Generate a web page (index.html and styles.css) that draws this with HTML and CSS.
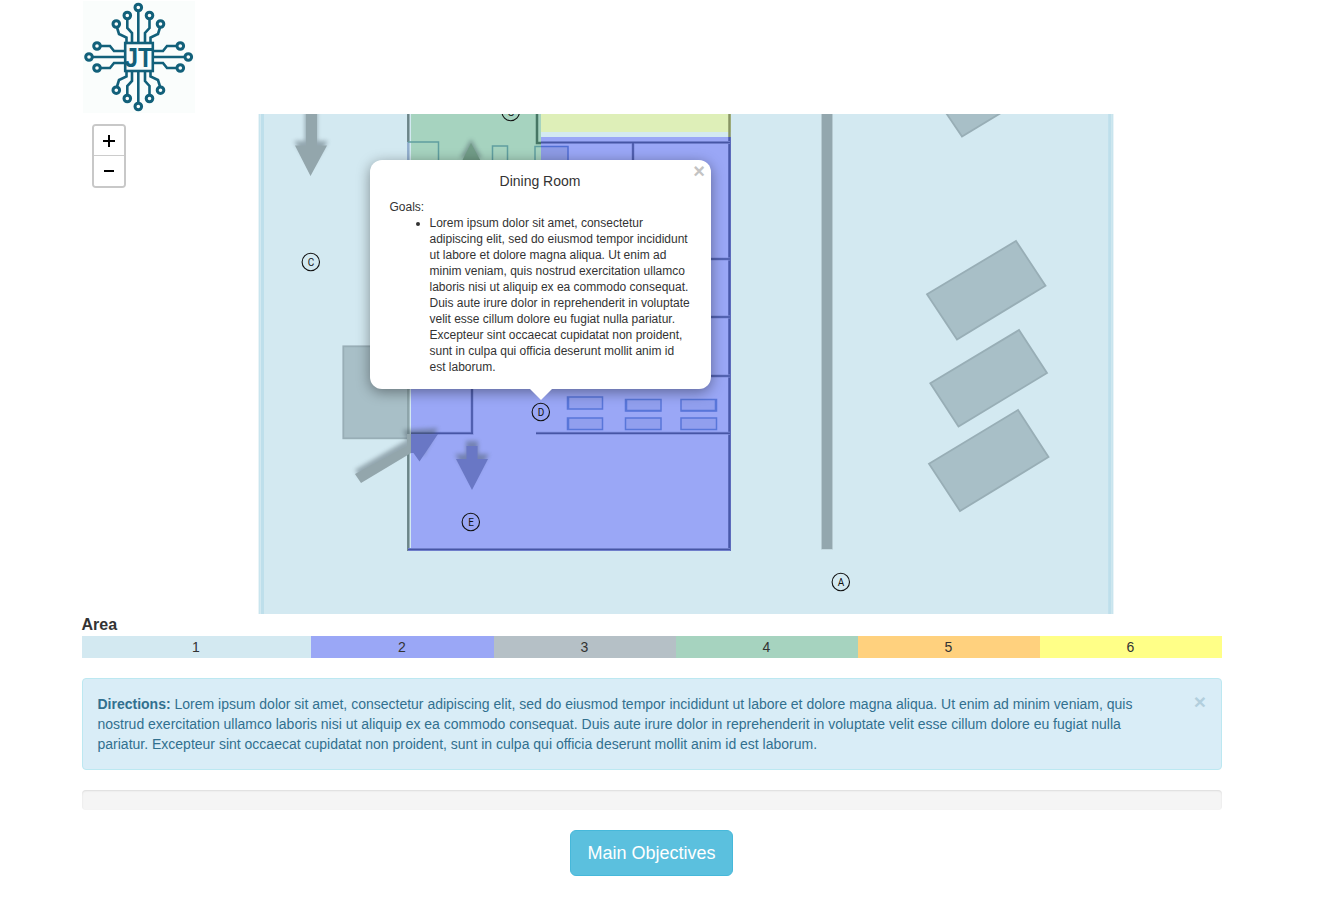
FILE: index.html
```html
<!DOCTYPE html>
<html lang="en">
<head>
<meta charset="utf-8">
<title>Floor Map</title>
<link rel="stylesheet" href="styles.css">
</head>
<body>
<main class="container">
  <header class="brand">
    <svg class="logo" viewBox="82 0 114 114" aria-label="JT">
      <rect class="logo-bg" x="83" y="1" width="112" height="112"/>
      <g class="traces">
        <rect x="125.2" y="43" width="27.6" height="28"/>
        <path d="M138.3 11V43M127.3 19V28L132 33V43M149.5 19V28L145 33V43M117 27.500L119 34L126.500 37.500V43M160 27.500L158 34L150.500 37.500V43"/>
        <path d="M138.300 103V71M127.300 95V86L132 81V71M149.500 95V86L145 81V71M117 86.500L119 80L126.500 76.500V71M160 86.500L158 80L150.500 76.500V71"/>
        <path d="M92 57H125M100 46H110L114 51H125M100 68H110L114 63H125M185 57H153M177 46H167L163 51H153M177 68H167L163 63H153"/>
      </g>
      <g class="pads">
        <circle cx="138.300" cy="7.500" r="3.300"/><circle cx="127.300" cy="15.500" r="3.300"/><circle cx="149.500" cy="15.500" r="3.300"/><circle cx="116.300" cy="24" r="3.300"/><circle cx="160.500" cy="24" r="3.300"/>
        <circle cx="138.300" cy="106.500" r="3.300"/><circle cx="127.300" cy="98.500" r="3.300"/><circle cx="149.500" cy="98.500" r="3.300"/><circle cx="116.300" cy="90.200" r="3.300"/><circle cx="160.500" cy="90.200" r="3.300"/>
        <circle cx="89" cy="57" r="3.300"/><circle cx="97" cy="46" r="3.300"/><circle cx="97" cy="68" r="3.300"/>
        <circle cx="188.300" cy="57" r="3.300"/><circle cx="180.300" cy="46" r="3.300"/><circle cx="180.300" cy="68" r="3.300"/>
      </g>
      <text class="logo-text" x="124.500" y="67.200" textLength="28.500" lengthAdjust="spacingAndGlyphs">JT</text>
    </svg>
  </header>

  <section class="map">
    <svg class="plan" viewBox="82 114 1140 500">
      <defs>
        <filter id="soft" x="-50%" y="-50%" width="200%" height="200%"><feGaussianBlur stdDeviation="2"/></filter>
      </defs>
      <rect class="area1" x="258.500" y="114" width="855" height="500"/>
      <path class="edge" d="M262.500 114V614M1109.700 114V614"/>
      <path class="edge-soft" d="M259.500 114V614M1112.500 114V614"/>

      <rect class="building" x="343.300" y="346.300" width="65" height="92"/>
      <path class="building" d="M940 104L962 136.500L1010 107.500L990 90Z"/>
      <path class="building" d="M927 294.300L1016 241L1045.500 285.700L957 339.500Z"/>
      <path class="building" d="M930.300 383.300L1019 330L1047 373L958.500 426.500Z"/>
      <path class="building" d="M929 463.700L1018 410L1048.500 457L960 511Z"/>
      <rect class="road-edge" x="821" y="114" width="12" height="435.500"/>
      <rect class="road" x="822" y="114" width="10" height="435"/>

      <rect class="area4" x="411" y="114" width="130" height="120"/>
      <rect class="area6" x="541" y="114" width="190" height="18"/>
      <path class="area2" d="M541 137H731V551H411V234H541Z"/>

      <path class="wall-gray" d="M408.300 114V142M408.300 438V551"/>
      <path class="wall-light" d="M408.300 142V390"/>
      <path class="wall-gray wall-faint" d="M408.300 389V438"/>
      <path class="wall-green" d="M537 114V143H541"/>
      <path class="wall-olive" d="M729.500 114V137"/>
      <path class="wall-navy" d="M729.500 137V551"/>
      <path class="wall-halo" d="M541 142.500H730M633 143V170M472 380V435M711 259H730M711 317H730M711 376H730M411 433.300H473M536 433.300H730M408 549.500H730"/>
      <path class="wall" d="M541 142.500H730M633 143V170M472 380V434M711 259H730M711 317H730M711 376H730M411 433.300H473M536 433.300H730M408 549.500H730"/>
      <path class="fixture-green" d="M408 142H438.500V170M492.500 170V146H507.500V170M535 170V146.500H541"/>
      <rect class="fixture-fill" x="541" y="146" width="27" height="20"/>
      <path class="fixture-blue" d="M541 146.500H568V170"/>

      <g class="tables">
        <rect x="567.500" y="397" width="35" height="12"/><rect x="625.500" y="399.500" width="35.500" height="11.500"/><rect x="681" y="399.500" width="35.500" height="11.500"/>
        <rect x="567.500" y="418" width="35" height="11.500"/><rect x="625.500" y="418" width="35.500" height="11.500"/><rect x="681" y="418" width="35.500" height="11.500"/>
        <path d="M568.500 397V409M568.500 418V430M626.500 399V411M626 410.500H661M681 410.500H716M715.500 399V411"/>
      </g>

      <g class="arrow-shadow" filter="url(#soft)">
        <path d="M305 105H317V141H328L311 168L294 141H305Z"/>
        <path d="M355 470L407 440L403 430L438 428L423 456L414 447L361 478Z"/>
        <path d="M466 441H478V454H489L472 483L455 454H466Z"/>
        <path d="M471 139L482 158H460Z"/>
      </g>
      <path class="arrow" d="M306 114H317V145.500H327L310.500 176L295 145.500H306ZM355 474L407 446V434H411V453L361 483Z"/>
      <path class="arrow-indigo" d="M411 434H438L419.500 461.500L413.500 453H411ZM466.500 446H477.500V459H488L472 490L456 459H466.500Z"/>
      <path class="arrow-green" d="M471 143L484 167H459Z"/>

      <g class="pins">
        <circle cx="510.700" cy="112" r="8.700"/><circle cx="310.800" cy="262" r="8.700"/><circle cx="540.800" cy="412" r="8.700"/><circle cx="470.800" cy="522" r="8.700"/><circle cx="840.800" cy="582" r="8.700"/>
      </g>
      <g class="pin-text">
        <text x="511" y="115.600">G</text><text x="311" y="265.600">C</text><text x="541" y="415.600">D</text><text x="471" y="525.600">E</text><text x="841" y="585.600">A</text>
      </g>
    </svg>

    <div class="zoom">
      <button class="zoom-btn" aria-label="Zoom in"><svg viewBox="0 0 30 30"><path d="M9 15H21M15 9V21"/></svg></button>
      <button class="zoom-btn" aria-label="Zoom out"><svg viewBox="0 0 30 30"><path d="M10 15H20"/></svg></button>
    </div>

    <article class="popup">
      <button class="popup-close">×</button>
      <h4 class="popup-title">Dining Room</h4>
      <div>Goals:</div>
      <ul class="goals">
        <li>Lorem ipsum dolor sit amet, consectetur<br>adipiscing elit, sed do eiusmod tempor incididunt<br>ut labore et dolore magna aliqua. Ut enim ad<br>minim veniam, quis nostrud exercitation ullamco<br>laboris nisi ut aliquip ex ea commodo consequat.<br>Duis aute irure dolor in reprehenderit in voluptate<br>velit esse cillum dolore eu fugiat nulla pariatur.<br>Excepteur sint occaecat cupidatat non proident,<br>sunt in culpa qui officia deserunt mollit anim id<br>est laborum.</li>
      </ul>
    </article>
  </section>

  <h2 class="legend-title">Area</h2>
  <div class="legend">
    <div class="key key1">1</div><div class="key key2">2</div><div class="key key3">3</div><div class="key key4">4</div><div class="key key5">5</div><div class="key key6">6</div>
  </div>

  <div class="alert">
    <p class="alert-text"><strong>Directions:</strong> Lorem ipsum dolor sit amet, consectetur adipiscing elit, sed do eiusmod tempor incididunt ut labore et dolore magna aliqua. Ut enim ad minim veniam, quis nostrud exercitation ullamco laboris nisi ut aliquip ex ea commodo consequat. Duis aute irure dolor in reprehenderit in voluptate velit esse cillum dolore eu fugiat nulla pariatur. Excepteur sint occaecat cupidatat non proident, sunt in culpa qui officia deserunt mollit anim id est laborum.</p>
    <button class="alert-close">×</button>
  </div>

  <div class="progress"></div>
  <div class="actions"><button class="btn">Main Objectives</button></div>
</main>
</body>
</html>
```
FILE: styles.css
```css
* { box-sizing: border-box; }
body { margin: 0; background: #fff; color: #333; font: 14px/20px "Liberation Sans", Arial, sans-serif; }
button { font-family: inherit; cursor: pointer; }
.container { width: 1140px; margin-left: 81.5px; }
.brand { height: 114px; }
.logo { display: block; width: 114px; height: 114px; }
.logo-bg { fill: #fafdfc; }
.traces { fill: none; stroke: #12607a; stroke-width: 2.6; }
.pads { fill: #fafdfc; stroke: #12607a; stroke-width: 3; }
.logo-text { fill: #12607a; font: bold 28px "Liberation Sans", sans-serif; }

.map { position: relative; height: 500px; }
.plan { display: block; width: 1140px; height: 500px; }
.area1 { fill: #d3e9f1; }
.edge { stroke: #bedfeb; stroke-width: 3; }
.edge-soft { stroke: #c9e5ee; stroke-width: 1; }
.building { fill: #a8bfc7; stroke: #98aeb6; stroke-width: 1.8; }
.road { fill: #93a7ae; }
.road-edge { fill: #b7cbd2; }
.area4 { fill: #a6d3bf; }
.area6 { fill: #deefb8; }
.area2 { fill: #9aa7f6; }
.wall-gray, .wall-light, .wall-green, .wall-olive, .wall-navy, .wall-halo, .wall { fill: none; stroke-width: 2.5; }
.wall-gray { stroke: #6c8588; }
.wall-faint { stroke: #8ea5aa; }
.wall-light { stroke: #91adcc; }
.wall-green { stroke: #467664; }
.wall-olive { stroke: #879464; }
.wall-navy { stroke: #4858a9; }
.wall-halo { stroke: #7e8cd9; stroke-width: 3; }
.wall { stroke: #4655a5; stroke-width: 1.6; }
.fixture-green, .fixture-blue { fill: none; stroke: #609fa0; stroke-width: 1.5; }
.fixture-blue { stroke: #506ed2; }
.fixture-fill { fill: #8d9be5; }
.tables { fill: #919fee; stroke: #5876d9; stroke-width: 1.5; }
.arrow-shadow { fill: #465660; opacity: .45; }
.arrow { fill: #93a6ac; }
.arrow-indigo { fill: #6977c5; }
.arrow-green { fill: #719c87; }
.pins { fill: none; stroke: #111; stroke-width: 1.1; }
.pin-text { fill: #111; font: 10px Roboto, sans-serif; text-anchor: middle; }

.zoom { position: absolute; left: 10px; top: 10px; width: 34px; border: 2px solid #c8c8c8; border-radius: 4px; background: #fff; overflow: hidden; }
.zoom-btn { display: block; width: 30px; height: 30px; padding: 0; border: 0; background: #fff; }
.zoom-btn:first-child { border-bottom: 1px solid #ccc; }
.zoom-btn svg { display: block; width: 30px; height: 30px; stroke: #000; stroke-width: 2; }

.popup { position: absolute; left: 288px; top: 46px; width: 341px; height: 229px; padding: 13px 20px; border-radius: 12px; background: #fff; font-size: 12px; line-height: 16px; box-shadow: 0 3px 14px rgba(0,0,0,.4); }
.popup::after { content: ""; position: absolute; left: 160px; top: 229px; border: 11px solid transparent; border-top-color: #fff; border-bottom: 0; }
.popup-title { margin: 0 0 10px; font-size: 14px; font-weight: 400; line-height: 16px; text-align: center; }
.goals { margin: 0; padding-left: 40px; white-space: nowrap; }
.popup-close { position: absolute; right: 4px; top: 4px; width: 15px; height: 14px; padding: 0; border: 0; background: none; color: #c3c3c3; font-size: 20px; font-weight: 700; line-height: 14px; }

.legend-title { height: 22px; margin: 0; font-size: 16px; line-height: 22px; }
.legend { display: grid; grid-template-columns: 229px 183px repeat(4, 182px); height: 22px; margin-bottom: 20px; }
.key { text-align: center; line-height: 22px; }
.key1 { background: #d3e9f1; } .key2 { background: #9aa7f6; } .key3 { background: #b5c0c6; }
.key4 { background: #a6d3bf; } .key5 { background: #ffd17e; } .key6 { background: #ffff87; }

.alert { display: flex; justify-content: space-between; align-items: flex-start; height: 92px; margin-bottom: 20px; padding: 15px; border: 1px solid #bce8f1; border-radius: 4px; background: #d9edf7; color: #31708f; }
.alert-text { width: 1054px; margin: 0; }
.alert-close { width: 13px; height: 16px; margin-right: -1px; padding: 0; border: 0; background: none; color: #b2cfdd; font-size: 21px; font-weight: 700; line-height: 16px; }
.progress { height: 20px; margin-bottom: 20px; border-radius: 4px; background: #f5f5f5; box-shadow: inset 0 1px 2px rgba(0,0,0,.1); }
.actions { display: flex; justify-content: center; }
.btn { width: 163px; height: 46px; padding: 0; border: 1px solid #46b8da; border-radius: 6px; background: #5bc0de; color: #fff; font-size: 18px; line-height: 24px; }
```
